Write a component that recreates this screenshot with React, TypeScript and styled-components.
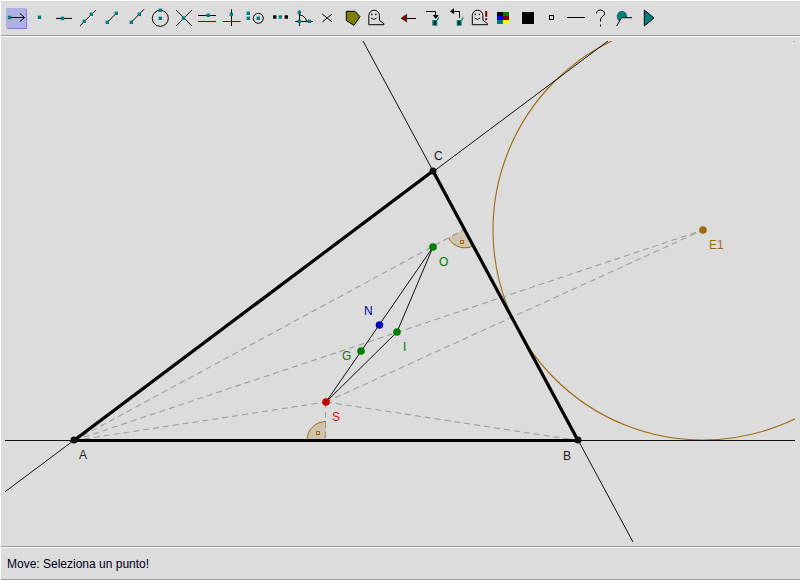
import React from "react";
import styled, { createGlobalStyle } from "styled-components";

const Global = createGlobalStyle`
  html, body { margin: 0; padding: 0; background: #dcdcdc; }
  #root { width: 800px; height: 580px; overflow: hidden; }
`;

const Window = styled.div`
  width: 800px;
  height: 580px;
  display: flex;
  flex-direction: column;
  background: #dcdcdc;
  border-left: 1px solid #fff;
  box-sizing: border-box;
  font-family: "Liberation Sans", Arial, sans-serif;
`;

const Toolbar = styled.div`
  height: 36px;
  box-sizing: border-box;
  display: flex;
  padding: 4px 0 0 3px;
  border-top: 1px solid #fff;
  border-bottom: 1px solid #999;
  flex: none;
`;

const Tool = styled.div<{ $active?: boolean; $gap?: number }>`
  position: relative;
  width: 24px;
  height: 24px;
  flex: none;
  margin-left: ${(p) => p.$gap ?? 0}px;
  &::before {
    content: "";
    display: ${(p) => (p.$active ? "block" : "none")};
    position: absolute;
    left: 2px;
    top: 3px;
    width: 20px;
    height: 20px;
    background: #b0b0e4;
    box-shadow: 1px 1px 0 #8080e0;
  }
`;

const Icon = styled.svg`
  position: relative;
  display: block;
  width: 24px;
  height: 24px;
  overflow: visible;
`;

const CanvasArea = styled.div`
  height: 510px;
  flex: none;
  border-top: 1px solid #fff;
  box-sizing: border-box;
`;

const Board = styled.svg`
  display: block;
  width: 799px;
  height: 509px;
`;

const Status = styled.div`
  flex: 1;
  box-sizing: border-box;
  border-top: 1px solid #999;
  border-bottom: 1px solid #999;
  display: flex;
  flex-direction: column;
`;

const StatusText = styled.div`
  flex: 1;
  border-top: 1px solid #fff;
  display: flex;
  align-items: center;
  padding-left: 6px;
  padding-top: 1px;
  font-size: 12px;
  color: #000018;
`;

const TEAL = "#008080";
const MAROON = "#800000";

const Sq = ({ x, y, c = TEAL }: { x: number; y: number; c?: string }) => (
  <rect x={x - 1.7} y={y - 1.7} width={3.4} height={3.4} fill={c} />
);

const L = ({ d, c = "#000" }: { d: string; c?: string }) => (
  <path d={d} fill="none" stroke={c} strokeWidth={1} />
);

const Ghost = ({ dx = 0 }: { dx?: number }) => (
  <g transform={`translate(${dx} 0)`}>
    <path
      d="M4.8 19.7 V10.5 A5.3 5.3 0 0 1 15.4 10.5 V15.3 L20 18.7 V19.7 Z"
      fill="none"
      stroke="#000"
      strokeWidth={1}
    />
    <rect x={7.2} y={8.6} width={1.2} height={1.6} fill="#000" />
    <rect x={11.2} y={8.6} width={1.2} height={1.6} fill="#000" />
    <path d="M7 13 Q9.8 16 12.6 13" fill="none" stroke="#000" strokeWidth={0.9} />
  </g>
);

const Cup = ({ x }: { x: number }) => (
  <g>
    <path d={`M${x + 4.5} 14.5 L${x + 6.5} 11 V13.5 L${x + 5.5} 15.5 Z`} fill={TEAL} />
    <rect x={x} y={15} width={5} height={5.7} fill={TEAL} />
    <rect x={x + 1.5} y={16} width={2} height={4} fill="#001818" />
  </g>
);

type ToolDef = { gap?: number; active?: boolean; art: React.ReactNode };

const tools: ToolDef[] = [
  {
    active: true,
    art: (
      <>
        <L d="M6 12.5 H20 M16 8.5 L20.5 12.5 L16 16.5" />
        <Sq x={5.6} y={12.4} />
      </>
    ),
  },
  { art: <Sq x={11.5} y={12.3} /> },
  {
    art: (
      <>
        <L d="M4 13.4 H20" />
        <Sq x={10.4} y={13.4} />
      </>
    ),
  },
  {
    art: (
      <>
        <L d="M4 20.7 L20 5" />
        <Sq x={8.3} y={16.3} />
        <Sq x={15.3} y={9.3} />
      </>
    ),
  },
  {
    art: (
      <>
        <L d="M7.3 17.3 L16.3 8.3" />
        <Sq x={7.3} y={17.3} />
        <Sq x={16.3} y={8.3} />
      </>
    ),
  },
  {
    art: (
      <>
        <L d="M7.3 17.3 L20 4.3" />
        <Sq x={7.3} y={17.3} />
        <Sq x={15.3} y={9.3} />
      </>
    ),
  },
  {
    art: (
      <>
        <circle cx={12.3} cy={13.3} r={8} fill="none" stroke="#000" strokeWidth={1} />
        <Sq x={12.3} y={13.3} />
        <Sq x={12.3} y={5.3} />
      </>
    ),
  },
  {
    art: (
      <>
        <L d="M4 5 L20 21 M20 5 L4 21" />
        <Sq x={11.5} y={13.2} />
      </>
    ),
  },
  {
    art: (
      <>
        <L d="M2 10.5 H20" />
        <L d="M2 16.5 H20" c={MAROON} />
        <Sq x={12.3} y={10.3} />
      </>
    ),
  },
  {
    art: (
      <>
        <L d="M11.5 4.3 V21" />
        <L d="M2.7 16.5 H20.7" c={MAROON} />
        <Sq x={11.3} y={9.3} />
      </>
    ),
  },
  {
    art: (
      <>
        <circle cx={14.3} cy={13.3} r={5} fill="none" stroke="#000" strokeWidth={1} />
        <Sq x={4.3} y={8.3} />
        <Sq x={4.3} y={13.3} />
        <Sq x={14.3} y={13.3} />
      </>
    ),
  },
  {
    art: (
      <>
        <Sq x={6.7} y={12} c="#000" />
        <Sq x={12.3} y={12} />
        <Sq x={18.3} y={12} c="#000" />
      </>
    ),
  },
  {
    art: (
      <>
        <L d="M7.5 5 V21 M3.3 16.5 H21" />
        <L d="M8 10 A8 8 0 0 1 14.5 16" />
        <Sq x={7.3} y={7.7} />
        <Sq x={7.3} y={16.3} />
        <Sq x={17.3} y={16.3} />
      </>
    ),
  },
  { art: <L d="M6.3 9 L16 17 M16 9 L6.3 17" /> },
  {
    art: (
      <path
        d="M6.3 6.3 H15 L20 11.7 L14 20.3 L6.3 15.7 Z"
        fill="#808000"
        stroke="#000"
        strokeWidth={1}
      />
    ),
  },
  { art: <Ghost /> },
  {
    gap: 7,
    art: (
      <>
        <L d="M10 13.5 H21" />
        <path d="M6 13.3 L11.7 9.3 V17 Z" fill={MAROON} stroke="#000" strokeWidth={0.5} />
      </>
    ),
  },
  {
    art: (
      <>
        <L d="M7 6.5 H16.5 V11" />
        <path d="M13.7 10 H19.7 L16.7 14 Z" fill="#000" />
        <Cup x={13.3} />
      </>
    ),
  },
  {
    art: (
      <>
        <L d="M9 6.5 H16.5 V13" />
        <path d="M7 6.3 L11 3.3 V9.3 Z" fill="#000" />
        <Cup x={13.7} />
      </>
    ),
  },
  {
    art: (
      <>
        <Ghost dx={0.5} />
        <rect x={18.2} y={6} width={2} height={5.8} fill={MAROON} />
        <rect x={18.2} y={13.2} width={2} height={2} fill={MAROON} />
      </>
    ),
  },
  {
    art: (
      <>
        <rect x={6} y={7} width={6} height={4} fill="#000" />
        <rect x={12} y={7} width={6} height={4} fill="#008000" />
        <rect x={6} y={11} width={6} height={4} fill="#0000ff" />
        <rect x={12} y={11} width={6} height={4} fill={MAROON} />
        <rect x={6} y={15} width={6} height={4} fill={TEAL} />
        <rect x={12} y={15} width={6} height={4} fill="#ffff00" />
      </>
    ),
  },
  { art: <rect x={7} y={7} width={12} height={12} fill="#000" /> },
  { art: <rect x={10.5} y={10.5} width={4} height={4} fill="none" stroke="#000" strokeWidth={1} /> },
  { art: <L d="M4 12.5 H22" /> },
  {
    art: (
      <path
        d="M9.5 8.5 C9.5 6 11.3 5 13.5 5 C16 5 17.5 6.5 17.5 8.7 C17.5 11 14 12 13.5 14 V16.5 M13.5 19.5 V21.5"
        fill="none"
        stroke="#000"
        strokeWidth={1}
      />
    ),
  },
  {
    art: (
      <>
        <L d="M5.7 21 L10.7 12.2 M10.7 12.7 H21" />
        <path
          d="M6.2 11.7 A4.8 4.8 0 1 1 15.5 12.7 H10.7 L8 15.8 A4.8 4.8 0 0 1 6.2 11.7 Z"
          fill={TEAL}
          stroke="#000"
          strokeWidth={0.4}
        />
      </>
    ),
  },
  {
    art: <path d="M9.3 5 L19 13 L9.3 21 Z" fill={TEAL} stroke="#000" strokeWidth={1} />,
  },
];

const A = [74, 440.5];
const B = [578, 440.5];
const C = [433, 171];
const O = [433, 247];
const N = [379.5, 325];
const G = [361, 351];
const I = [397, 332];
const S = [326, 402];
const E1 = [703, 230];
const FOOT = [465, 229];

const thin: [number, number, number, number][] = [
  [5, 440.5, 795, 440.5],
  [5, 491.8, 608, 41],
  [363, 41, 633, 542],
  [S[0], S[1], O[0], O[1]],
  [S[0], S[1], I[0], I[1]],
  [I[0], I[1], O[0], O[1]],
];

const dashed: [number, number, number, number][] = [
  [A[0], A[1], FOOT[0], FOOT[1]],
  [A[0], A[1], E1[0], E1[1]],
  [A[0], A[1], S[0], S[1]],
  [S[0], S[1], B[0], B[1]],
  [S[0], S[1], E1[0], E1[1]],
  [325.5, S[1], 325.5, 440],
];

const labels: { t: string; x: number; y: number; c: string }[] = [
  { t: "A", x: 79, y: 459, c: "#202020" },
  { t: "B", x: 563, y: 460, c: "#202020" },
  { t: "C", x: 434, y: 160, c: "#202020" },
  { t: "O", x: 439, y: 266, c: "#008000" },
  { t: "N", x: 364, y: 315, c: "#0000a0" },
  { t: "G", x: 342, y: 360, c: "#207020" },
  { t: "I", x: 403, y: 351, c: "#008000" },
  { t: "S", x: 332, y: 421, c: "#d02020" },
  { t: "E1", x: 709, y: 249, c: "#a06a10" },
];

const dots: { p: number[]; c: string; r: number }[] = [
  { p: [A[0], 440], c: "#101010", r: 3.5 },
  { p: [B[0], 440], c: "#101010", r: 3.5 },
  { p: C, c: "#101010", r: 3.5 },
  { p: O, c: "#008000", r: 3.8 },
  { p: N, c: "#0000c0", r: 3.8 },
  { p: G, c: "#008000", r: 3.8 },
  { p: I, c: "#008000", r: 3.8 },
  { p: S, c: "#c00000", r: 3.8 },
  { p: E1, c: "#a06a10", r: 3.8 },
];

const BROWN = "#a06a10";
const WEDGE = "rgba(170,120,40,0.25)";

export default function App() {
  return (
    <Window>
      <Global />
      <Toolbar>
        {tools.map((t, i) => (
          <Tool key={i} $active={t.active} $gap={t.gap}>
            <Icon viewBox="0 0 24 24">{t.art}</Icon>
          </Tool>
        ))}
      </Toolbar>
      <CanvasArea>
        <Board viewBox="1 37 799 509">
          <defs>
            <clipPath id="view">
              <rect x={5} y={41} width={790} height={501} />
            </clipPath>
          </defs>
          <g clipPath="url(#view)">
            <circle cx={E1[0]} cy={E1[1]} r={210} fill="none" stroke={BROWN} strokeWidth={1.1} />
            {dashed.map((d, i) => (
              <line
                key={i}
                x1={d[0]}
                y1={d[1]}
                x2={d[2]}
                y2={d[3]}
                stroke="#a0a0a0"
                strokeWidth={1.1}
                strokeDasharray="6 4"
              />
            ))}
            <path d="M307 440 A19 19 0 0 1 326 421.5 V440 Z" fill={WEDGE} />
            <path d="M307 440 A19 19 0 0 1 326 421.5" fill="none" stroke={BROWN} strokeWidth={1} />
            <rect x={316.5} y={431.5} width={3} height={3} fill="none" stroke={BROWN} strokeWidth={1} />
            <path d="M448.5 238 A18.7 18.7 0 0 0 473.9 245.5 L465 229 Z" fill={WEDGE} />
            <path d="M448.5 238 A18.7 18.7 0 0 0 473.9 245.5" fill="none" stroke={BROWN} strokeWidth={1} />
            <rect x={460.5} y={240.5} width={3} height={3} fill="none" stroke={BROWN} strokeWidth={1} />
            {thin.map((d, i) => (
              <line key={i} x1={d[0]} y1={d[1]} x2={d[2]} y2={d[3]} stroke="#101010" strokeWidth={1} />
            ))}
            <path
              d={`M${A[0]} ${A[1]} L${B[0]} ${B[1]} L${C[0]} ${C[1]} Z`}
              fill="none"
              stroke="#000"
              strokeWidth={3.2}
            />
            {dots.map((d, i) => (
              <circle key={i} cx={d.p[0]} cy={d.p[1]} r={d.r} fill={d.c} />
            ))}
            {labels.map((l) => (
              <text
                key={l.t}
                x={l.x}
                y={l.y}
                fontSize={12}
                fill={l.c}
                fontFamily="Liberation Sans, Arial, sans-serif"
              >
                {l.t}
              </text>
            ))}
          </g>
        </Board>
      </CanvasArea>
      <Status>
        <StatusText>Move: Seleziona un punto!</StatusText>
      </Status>
    </Window>
  );
}
